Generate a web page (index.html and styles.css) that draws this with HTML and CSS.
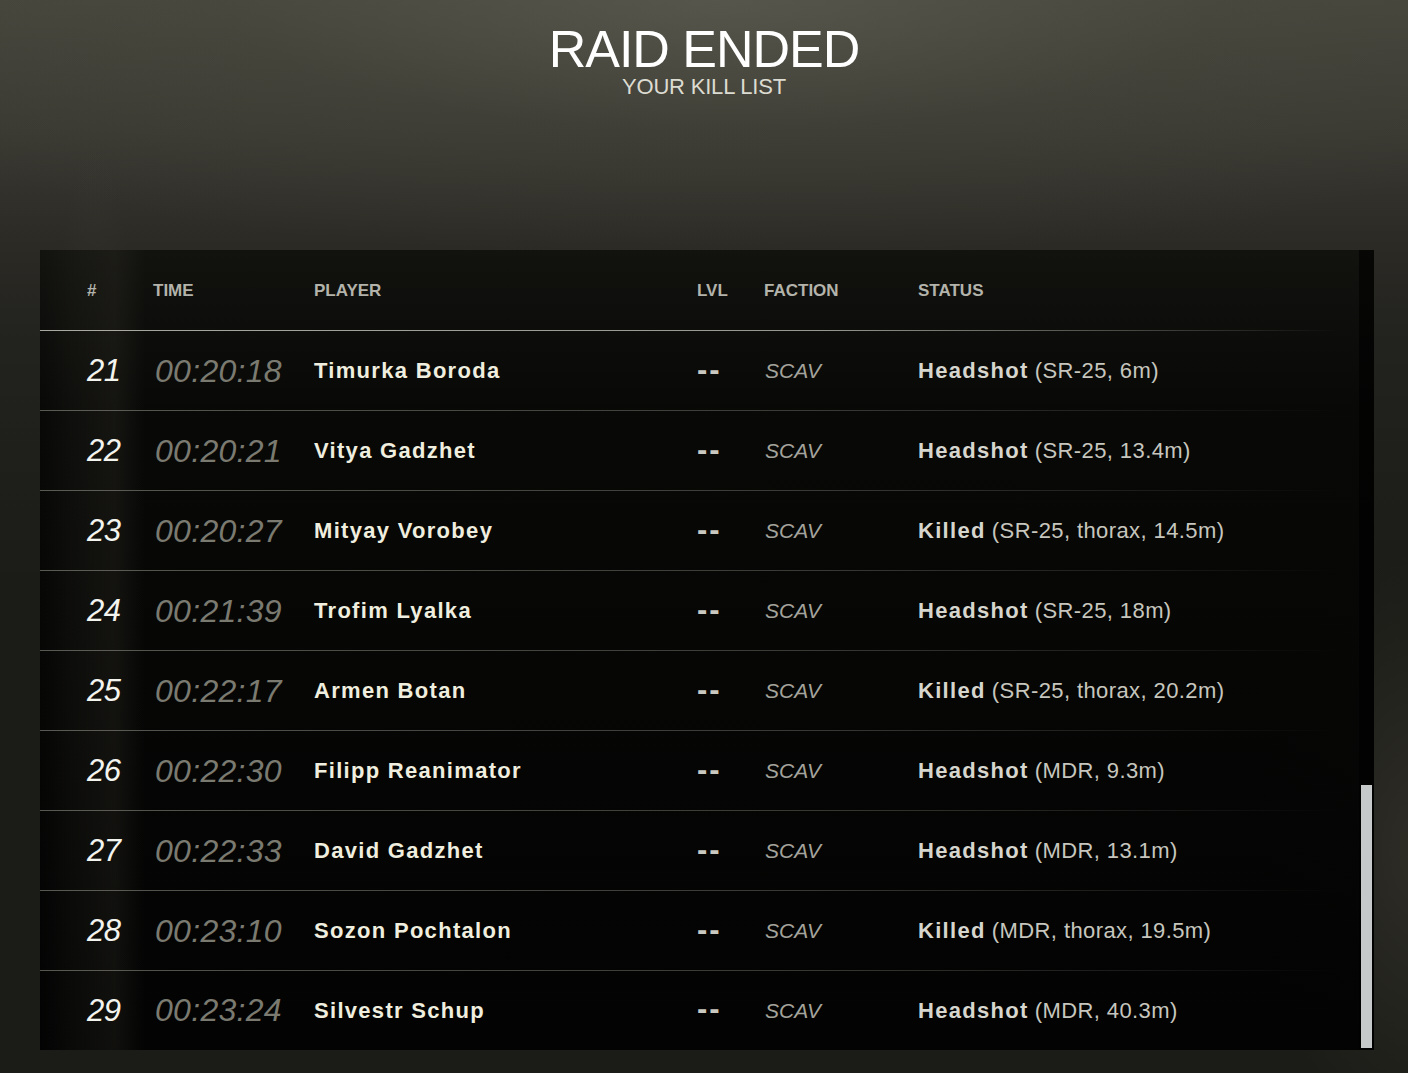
FILE: index.html
```html
<!DOCTYPE html>
<html lang="en">
<head>
<meta charset="utf-8">
<title>Raid Ended</title>
<link rel="stylesheet" href="styles.css">
</head>
<body>
<div class="page">
  <header class="title-block">
    <h1 class="title">RAID ENDED</h1>
    <div class="subtitle">YOUR KILL LIST</div>
  </header>

  <section class="panel">
    <div class="table">
      <div class="row head">
        <div class="c num">#</div>
        <div class="c time">TIME</div>
        <div class="c player">PLAYER</div>
        <div class="c lvl">LVL</div>
        <div class="c faction">FACTION</div>
        <div class="c status">STATUS</div>
      </div>

      <div class="row">
        <div class="c num">21</div><div class="c time">00:20:18</div><div class="c player">Timurka Boroda</div>
        <div class="c lvl">--</div><div class="c faction">SCAV</div>
        <div class="c status"><b>Headshot</b> <span>(SR-25, 6m)</span></div>
      </div>
      <div class="row">
        <div class="c num">22</div><div class="c time">00:20:21</div><div class="c player">Vitya Gadzhet</div>
        <div class="c lvl">--</div><div class="c faction">SCAV</div>
        <div class="c status"><b>Headshot</b> <span>(SR-25, 13.4m)</span></div>
      </div>
      <div class="row">
        <div class="c num">23</div><div class="c time">00:20:27</div><div class="c player">Mityay Vorobey</div>
        <div class="c lvl">--</div><div class="c faction">SCAV</div>
        <div class="c status"><b>Killed</b> <span>(SR-25, thorax, 14.5m)</span></div>
      </div>
      <div class="row">
        <div class="c num">24</div><div class="c time">00:21:39</div><div class="c player">Trofim Lyalka</div>
        <div class="c lvl">--</div><div class="c faction">SCAV</div>
        <div class="c status"><b>Headshot</b> <span>(SR-25, 18m)</span></div>
      </div>
      <div class="row">
        <div class="c num">25</div><div class="c time">00:22:17</div><div class="c player">Armen Botan</div>
        <div class="c lvl">--</div><div class="c faction">SCAV</div>
        <div class="c status"><b>Killed</b> <span>(SR-25, thorax, 20.2m)</span></div>
      </div>
      <div class="row">
        <div class="c num">26</div><div class="c time">00:22:30</div><div class="c player">Filipp Reanimator</div>
        <div class="c lvl">--</div><div class="c faction">SCAV</div>
        <div class="c status"><b>Headshot</b> <span>(MDR, 9.3m)</span></div>
      </div>
      <div class="row">
        <div class="c num">27</div><div class="c time">00:22:33</div><div class="c player">David Gadzhet</div>
        <div class="c lvl">--</div><div class="c faction">SCAV</div>
        <div class="c status"><b>Headshot</b> <span>(MDR, 13.1m)</span></div>
      </div>
      <div class="row">
        <div class="c num">28</div><div class="c time">00:23:10</div><div class="c player">Sozon Pochtalon</div>
        <div class="c lvl">--</div><div class="c faction">SCAV</div>
        <div class="c status"><b>Killed</b> <span>(MDR, thorax, 19.5m)</span></div>
      </div>
      <div class="row last">
        <div class="c num">29</div><div class="c time">00:23:24</div><div class="c player">Silvestr Schup</div>
        <div class="c lvl">--</div><div class="c faction">SCAV</div>
        <div class="c status"><b>Headshot</b> <span>(MDR, 40.3m)</span></div>
      </div>
    </div>
    <div class="scrollbar"><div class="thumb"></div></div>
  </section>
</div>
</body>
</html>
```

FILE: styles.css
```css
* { box-sizing: border-box; }

html, body {
  margin: 0;
  padding: 0;
  height: 1073px;
  overflow: hidden;
  background: #151512;
}

.page {
  height: 1073px;
  font-family: "Liberation Sans", Arial, sans-serif;
  background:
    radial-gradient(ellipse 50px 420px at 95px 560px, rgba(120,118,100,0.12), rgba(0,0,0,0) 100%),
    radial-gradient(ellipse 160px 300px at 1420px 850px, rgba(90,88,74,0.3), rgba(0,0,0,0) 100%),
    radial-gradient(ellipse 1000px 260px at 720px 0px, rgba(100,99,88,0.55) 0%, rgba(80,79,68,0.25) 50%, rgba(0,0,0,0) 100%),
    linear-gradient(to bottom, #46453c 0%, #3a3932 12%, #2c2b26 22%, #22221e 32%, #1b1b17 55%, #1b1b17 100%);
  padding-top: 23px;
}

.title-block {
  text-align: center;
  height: 227px;
}

.title {
  margin: 0;
  font-weight: 400;
  font-size: 52px;
  line-height: 52px;
  letter-spacing: -1px;
  color: #ffffff;
}

.subtitle {
  margin-top: 1px;
  font-size: 22px;
  line-height: 22px;
  letter-spacing: -0.2px;
  color: #dcdcd2;
}

.panel {
  margin-left: 40px;
  width: 1334px;
  height: 800px;
  display: flex;
  background:
    linear-gradient(to right, rgba(0,0,0,0) 0px, rgba(60,58,48,0.12) 30px, rgba(70,68,56,0.2) 75px, rgba(0,0,0,0) 105px),
    linear-gradient(to bottom, rgba(16,16,13,0.92) 0%, rgba(7,7,6,0.95) 20%, rgba(2,2,2,0.97) 100%);
}

.table {
  flex: 1;
  display: flex;
  flex-direction: column;
}

.row {
  display: grid;
  grid-template-columns: 66px 161px 383px 67px 154px 1fr;
  align-items: center;
  padding-left: 47px;
  height: 80px;
  background: linear-gradient(to right, rgba(170,170,160,0.5) 0%, rgba(150,150,140,0.35) 60%, rgba(120,120,110,0.18) 85%, rgba(0,0,0,0) 100%) left bottom / 1300px 1px no-repeat;
}

.row.head {
  height: 81px;
  background: linear-gradient(to right, rgba(220,220,210,0.75) 0%, rgba(210,210,200,0.7) 60%, rgba(170,170,160,0.35) 85%, rgba(0,0,0,0) 100%) left bottom / 1300px 1px no-repeat;
}

.row.last { background: none; height: 79px; }

.row .num {
  font-style: italic;
  font-size: 31px;
  color: #f4f4ee;
  letter-spacing: -0.5px;
}

.row .time {
  font-style: italic;
  font-size: 32px;
  color: #7a7a70;
  letter-spacing: 0.3px;
  padding-left: 2px;
}

.row .player {
  font-weight: 700;
  font-size: 22px;
  letter-spacing: 1.3px;
  color: #efeedf;
}

.row .lvl {
  font-weight: 700;
  font-size: 31px;
  line-height: 31px;
  letter-spacing: 2px;
  color: #c9c9c1;
  padding-bottom: 4px;
}

.row .faction {
  font-style: italic;
  font-size: 21px;
  color: #a3a39b;
  padding-left: 1px;
}

.row .status {
  font-size: 22px;
  color: #c6c6be;
}

.row .status b {
  font-weight: 700;
  letter-spacing: 1.3px;
  color: #d6d6ce;
}

.row .status span {
  letter-spacing: 0.4px;
}

.head .num, .head .time, .head .faction, .head .lvl, .head .status, .head .player {
  font-style: normal;
  font-weight: 700;
  font-size: 17px;
  line-height: 20px;
  letter-spacing: 0;
  color: #b3b3ab;
  padding: 1px 0 0 0;
}

.scrollbar {
  width: 15px;
  background: rgba(0,0,0,0.6);
  position: relative;
}

.thumb {
  position: absolute;
  left: 2px;
  width: 11px;
  top: 535px;
  height: 263px;
  background: #c5c9c9;
}
```
